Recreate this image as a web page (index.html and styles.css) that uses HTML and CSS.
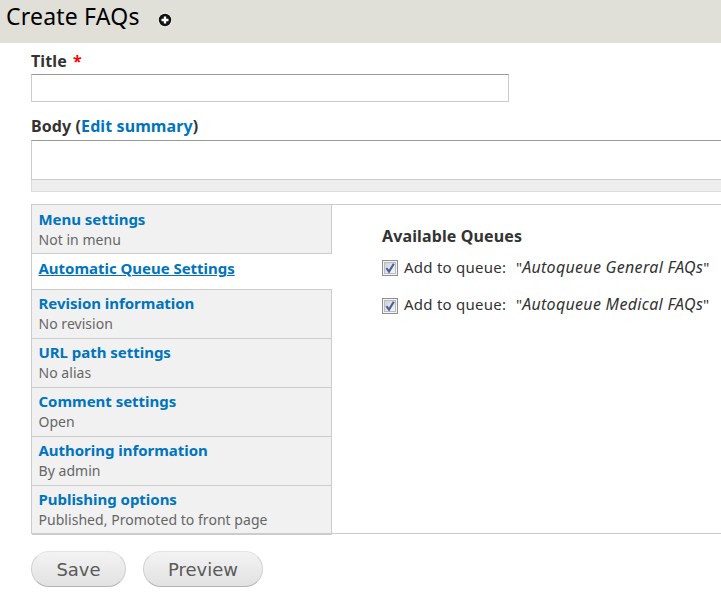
FILE: index.html
```html
<!DOCTYPE html>
<html lang="en">
<head>
<meta charset="utf-8">
<title>Create FAQs</title>
<link rel="stylesheet" href="styles.css">
</head>
<body>
<header class="branding">
  <h1>Create FAQs</h1>
  <svg class="add" viewBox="0 0 14 14" width="14" height="14" aria-hidden="true">
    <circle cx="7" cy="7" r="7" fill="#f4f3ef"/>
    <circle cx="7" cy="7" r="6.2" fill="#111"/>
    <path d="M7 3.5v7M3.5 7h7" stroke="#fff" stroke-width="2.4"/>
  </svg>
</header>
<main>
  <label class="label" for="title">Title <span class="required">*</span></label>
  <input class="title-input" id="title" type="text">
  <div class="label body-label">Body (<a href="#">Edit summary</a>)</div>
  <div class="textarea"></div>
  <div class="grip"></div>
  <section class="vertical-tabs">
    <ul class="tabs">
      <li class="first"><a href="#">Menu settings</a><span>Not in menu</span></li>
      <li class="active"><a href="#">Automatic Queue Settings</a></li>
      <li><a href="#">Revision information</a><span>No revision</span></li>
      <li><a href="#">URL path settings</a><span>No alias</span></li>
      <li><a href="#">Comment settings</a><span>Open</span></li>
      <li><a href="#">Authoring information</a><span>By admin</span></li>
      <li class="last"><a href="#">Publishing options</a><span>Published, Promoted to front page</span></li>
    </ul>
    <div class="pane">
      <h2>Available Queues</h2>
      <div class="option">
        <svg class="check" viewBox="0 0 16 16" width="16" height="16"><use href="#box"/></svg>
        <span class="add-text">Add to queue:</span><span class="queue">"<em>Autoqueue General FAQs</em>"</span>
      </div>
      <div class="option">
        <svg class="check" viewBox="0 0 16 16" width="16" height="16"><use href="#box"/></svg>
        <span class="add-text">Add to queue:</span><span class="queue">"<em>Autoqueue Medical FAQs</em>"</span>
      </div>
    </div>
  </section>
  <div class="actions">
    <button class="save">Save</button>
    <button class="preview">Preview</button>
  </div>
</main>
<svg class="defs" width="0" height="0" aria-hidden="true">
  <defs>
    <linearGradient id="shade" x1="0" y1="0" x2="1" y2="1">
      <stop offset="0" stop-color="#cbcfd5"/>
      <stop offset="1" stop-color="#f6f6f6"/>
    </linearGradient>
    <g id="box">
      <rect x=".5" y=".5" width="15" height="15" fill="#f4f4f4" stroke="#8e8f8f"/>
      <rect x="2.5" y="2.5" width="11" height="11" fill="url(#shade)" stroke="#b8bcc2"/>
      <path d="M4.4 8.2L7 11.6L11.8 3.8" fill="none" stroke="#4a5f97" stroke-width="2.1"/>
    </g>
  </defs>
</svg>
</body>
</html>
```

FILE: styles.css
```css
* { box-sizing: border-box; }
body {
  margin: 0;
  height: 600px;
  overflow: hidden;
  background: #fff;
  color: #333;
  font-family: "Noto Sans", "Open Sans", sans-serif;
  font-size: 15px;
}
a { color: #0074bd; text-decoration: none; }
.branding {
  display: flex;
  height: 43px;
  padding-left: 6px;
  background: #e0dfd8;
}
h1 {
  margin: 0;
  width: 152.4px;
  color: #000;
  font-size: 23px;
  font-weight: 400;
  letter-spacing: 0.2px;
  line-height: 33px;
  white-space: nowrap;
}
.add { margin-top: 13px; }
main { padding: 8px 0 0 31px; }
.label {
  display: block;
  height: 23px;
  font-size: 16px;
  font-weight: 700;
  letter-spacing: 0.1px;
  line-height: 20px;
}
.required { margin-left: 2px; color: #f00; }
.title-input {
  display: block;
  width: 478px;
  height: 28px;
  border: 1px solid #ccc;
  border-top-color: #999;
  background: #fff;
}
.body-label { margin-top: 14px; height: 24px; }
.textarea {
  height: 40px;
  border: 1px solid #ccc;
  border-top-color: #999;
  border-right: 0;
}
.grip {
  height: 12px;
  border: 1px solid #ddd;
  border-width: 0 0 1px 1px;
  background: #eee;
}
.vertical-tabs {
  display: flex;
  height: 330px;
  margin-top: 12px;
  border: 1px solid #ccc;
  border-right: 0;
}
.tabs {
  flex: none;
  width: 300px;
  height: 330px;
  margin: -1px 0 0;
  padding: 0;
  list-style: none;
}
.tabs li {
  height: 49px;
  padding: 3px 0 0 6.5px;
  border: 1px solid #ccc;
  border-width: 1px 1px 0 0;
  background: #f1f1f1;
  white-space: nowrap;
}
.tabs .first { padding-top: 4px; }
.tabs .active {
  height: 36px;
  padding-top: 4px;
  border-right: 0;
  background: #fff;
}
.tabs .last { height: 50px; border-bottom: 2px solid #ccc; }
.tabs a {
  display: block;
  width: max-content;
  font-size: 15px;
  font-weight: 700;
  letter-spacing: -0.03px;
  line-height: 20px;
}
.tabs .active a { text-decoration: underline; }
.tabs span {
  display: block;
  width: max-content;
  margin-top: 1px;
  color: #666;
  font-size: 14px;
  letter-spacing: 0.04px;
  line-height: 20px;
}
.pane { padding: 20px 0 0 50px; }
h2 {
  margin: 0 0 12px;
  font-size: 16px;
  font-weight: 700;
  letter-spacing: 0.12px;
  line-height: 22px;
}
.option {
  display: flex;
  height: 37px;
  line-height: 17px;
  white-space: nowrap;
}
.option + .option .check { margin-top: 2px; }
.check { flex: none; margin: 1px 6px 0 0; }
.add-text { width: 112px; letter-spacing: 0.25px; }
.queue em { font-size: 16px; letter-spacing: 0.3px; }
.actions { display: flex; gap: 17px; margin-top: 17px; }
button {
  height: 36px;
  padding: 0;
  border: 1px solid #d0d0d0;
  border-top-color: #e4e4e4;
  border-bottom-color: #b4b4b4;
  border-radius: 18px;
  background: linear-gradient(#f3f3f3, #e2e2e2);
  color: #5a5a5a;
  font-family: "DejaVu Sans", sans-serif;
  font-size: 18px;
}
.save { width: 95px; }
.preview { width: 120px; }
```
